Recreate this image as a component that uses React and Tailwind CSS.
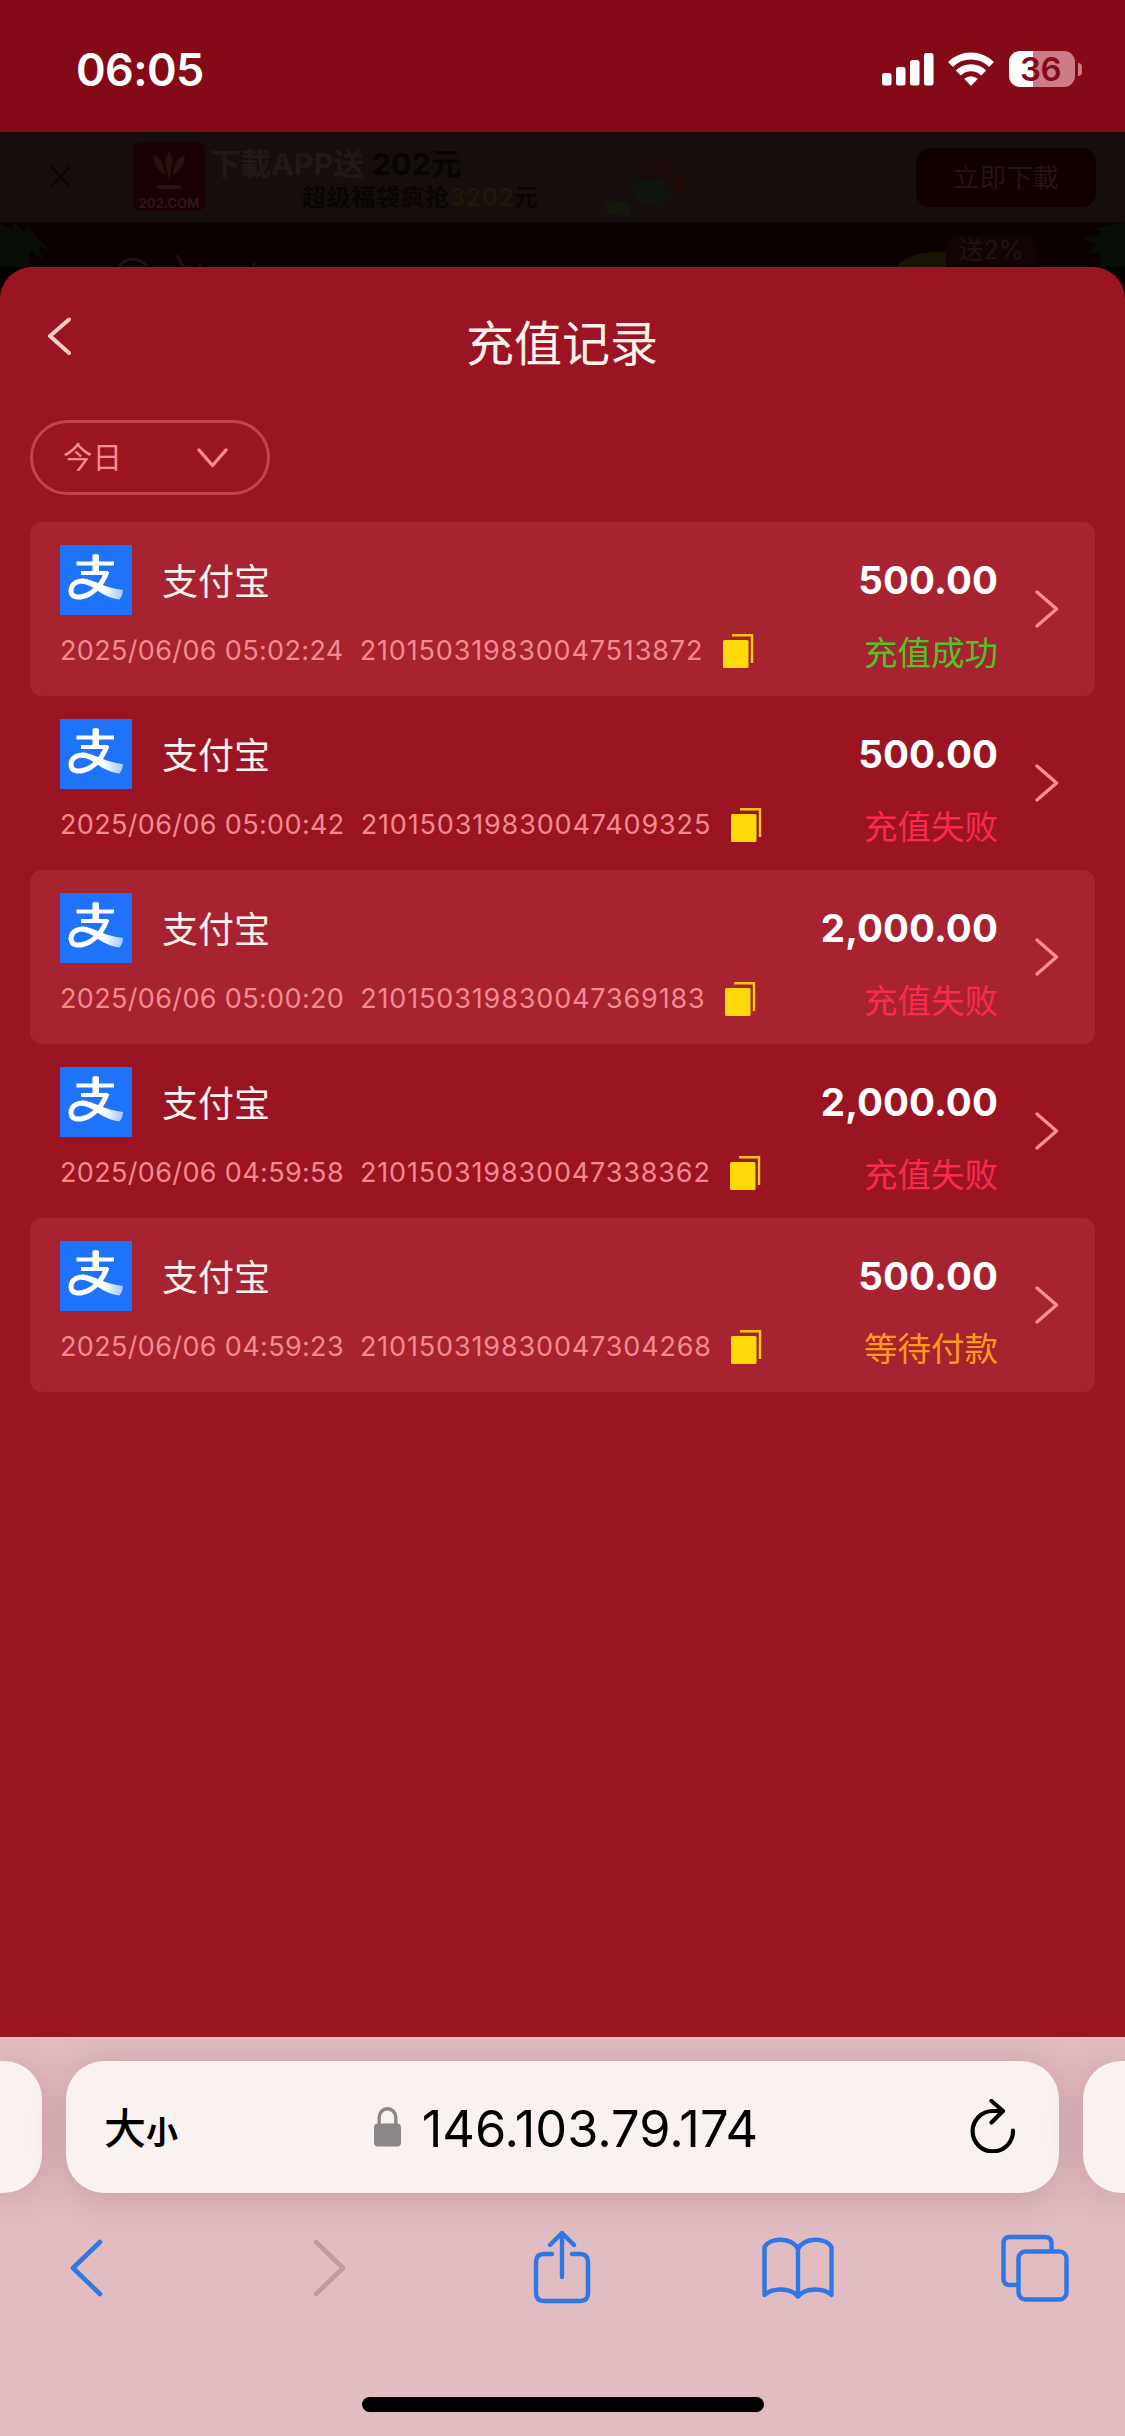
import React from "react";

const records = [
  { time: "2025/06/06 05:02:24", id: "210150319830047513872", amount: "500.00", status: "success" },
  { time: "2025/06/06 05:00:42", id: "210150319830047409325", amount: "500.00", status: "failed" },
  { time: "2025/06/06 05:00:20", id: "210150319830047369183", amount: "2,000.00", status: "failed" },
  { time: "2025/06/06 04:59:58", id: "210150319830047338362", amount: "2,000.00", status: "failed" },
  { time: "2025/06/06 04:59:23", id: "210150319830047304268", amount: "500.00", status: "pending" },
];

const statusMap = {
  success: { label: "充值成功", color: "text-[#4fc32b]" },
  failed: { label: "充值失败", color: "text-[#fb2a50]" },
  pending: { label: "等待付款", color: "text-[#fd9a1c]" },
};

const StatusBar = () => (
  <header className="h-[132px] shrink-0 flex items-start justify-between bg-[#850a18] pl-[76px] pr-[43px] text-white">
    <span className="mt-[42px] text-[45px] leading-[56px] tracking-[-0.6px] font-semibold">06:05</span>
    <div className="mt-[51px] flex items-start">
      <svg className="mt-[2px]" width="52" height="33" viewBox="0 0 52 33" fill="currentColor">
        <rect x="0" y="20" width="9.5" height="12.5" rx="2.5" />
        <rect x="14" y="14" width="9.5" height="18.5" rx="2.5" />
        <rect x="28" y="7" width="9.5" height="25.5" rx="2.5" />
        <rect x="42" y="0" width="9.5" height="32.5" rx="2.5" />
      </svg>
      <svg className="ml-[14px] mt-px" width="46" height="34" viewBox="0 0 46 34" fill="none" stroke="currentColor" strokeWidth="7">
        <path d="M2.5 12.5a29 29 0 0 1 41 0" />
        <path d="M10.3 21a18 18 0 0 1 25.4 0" />
        <path d="M23 34l-6.8-7.2q6.8-5 13.6 0z" fill="currentColor" stroke="none" />
      </svg>
      <div className="ml-[15px] flex items-center">
        <div className="w-[66px] h-[36px] rounded-[11px] bg-[linear-gradient(90deg,#fff_24px,#cd7b86_24px)] flex items-center justify-center">
          <span className="text-[33px] leading-none font-semibold text-[#850a18] tracking-[-0.5px] mr-[3px]">36</span>
        </div>
        <div className="ml-[3px] w-[4px] h-[13px] rounded-r-full bg-[#cd7b86]" />
      </div>
    </div>
  </header>
);

/* Page behind the sheet, darkened by the overlay */
const DimmedPage = () => (
  <div className="h-[135px] shrink-0 bg-[#0b0101]">
    <div className="h-[90px] bg-[#150e0d] flex items-start">
      <svg className="ml-[49px] mt-[31px]" width="23" height="27" viewBox="0 0 26 28" stroke="#090505" strokeWidth="2.5">
        <path d="M2 2l22 24M24 2L2 26" />
      </svg>
      <div className="ml-[61px] mt-[10px] w-[72px] h-[69px] rounded-lg bg-[#1a0103] flex flex-col items-center justify-end">
        <svg width="40" height="48" viewBox="0 0 40 44" fill="#241310">
          <path d="M20 2l4 8-4 22-4-22zM4 6q10 2 12 20Q5 20 4 6zM36 6q-10 2-12 20Q35 20 36 6zM8 36h24v4H8z" />
        </svg>
        <span className="text-[13px] leading-[16px] font-bold text-[#2a1917]">202.COM</span>
      </div>
      <div className="ml-[5px] mt-[14px] w-[330px] flex flex-col">
        <span className="text-[30.5px] leading-[36px] font-bold text-[#211918] whitespace-nowrap">
          下載APP送<span className="ml-2 text-[#090404]">202元</span>
        </span>
        <span className="ml-[92px] text-[24px] leading-[32px] tracking-[0.6px] font-bold text-[#0a0504] whitespace-nowrap">
          超级福袋疯抢<span className="text-[#24150a]">3202</span>元
        </span>
      </div>
      <svg className="ml-[50px] mt-[8px]" width="150" height="80" viewBox="0 0 150 80">
        <path d="M52 22l24-8 12 18-16 14-20-8z" fill="#1a0b0a" />
        <path d="M82 36h14v18H84z" fill="#1e0808" />
        <path d="M42 44l30-6 6 24-30 4z" fill="#10140e" />
        <path d="M12 60l26 2 4 14-24-2z" fill="#14170b" />
      </svg>
      <div className="ml-[176px] mt-[16px] w-[180px] h-[59px] rounded-[14px] bg-[#100002] flex items-center justify-center text-[26.5px] text-[#241414]">
        立即下載
      </div>
    </div>
    <div className="h-[45px] flex items-start justify-between">
      <div className="flex items-start">
        <svg width="60" height="45" viewBox="0 0 60 45" fill="#090d08">
          <path d="M0 2l12 6 2-8 10 10 4-8 8 12 14 14-12-4 6 16-14-12-2 18H0z" />
        </svg>
        <svg className="ml-[56px] mt-[33px]" width="150" height="12" viewBox="0 0 150 12" fill="none" stroke="#1d1111" strokeWidth="3">
          <path d="M2 12Q16-4 32 12M61 0l6 12M84 12v-4M138 12v-4" />
        </svg>
      </div>
      <div className="flex items-start">
        <svg className="mt-[28px]" width="50" height="17" viewBox="0 0 50 17" fill="#171402">
          <path d="M0 17Q14 0 50 2v15z" />
        </svg>
        <div className="mt-[13px] w-[90px] h-[32px] rounded-t-xl bg-[#120405] flex items-center justify-center text-[25px] text-[#241211]">送2%</div>
        <svg className="ml-[39px]" width="50" height="45" viewBox="0 0 50 45" fill="#090d08">
          <path d="M50 0L34 4 20 6l8 6-22 4 16 6-12 10 16-2-2 15h28z" />
        </svg>
      </div>
    </div>
  </div>
);

const AlipayLogo = () => (
  <svg width="72" height="70" viewBox="0 0 72 70" fill="none">
    <defs>
      <linearGradient id="tail" x1="44" y1="46" x2="64" y2="50" gradientUnits="userSpaceOnUse">
        <stop stopColor="#fff" />
        <stop offset="1" stopColor="#9cc4ff" />
      </linearGradient>
    </defs>
    <rect width="72" height="70" fill="#1f72fa" />
    <path d="M16.5 18.5H54M21 28h27" stroke="#fff" strokeWidth="4" />
    <path d="M32.5 10q3-2 6.500 0V28h-6.500z" fill="#fff" />
    <path d="M47 26.500Q42 41 31 48C20 54.500 11 53 11 45.500 11 38 19 34.500 27 36.500" stroke="#fff" strokeWidth="5" />
    <path d="M22 33.500Q30 34 38 38 50 43.500 63 45q0 5-3.500 9.500Q48 53 38 46 29 39 21 38.500z" fill="url(#tail)" />
  </svg>
);

const CopyIcon = () => (
  <svg className="ml-[19.5px]" width="32" height="34" viewBox="0 0 32 34">
    <rect x="0" y="6" width="25.500" height="28" rx="1.500" fill="#fdd90a" />
    <path d="M9 1.200h20V29" fill="none" stroke="#fdca1c" strokeWidth="2.400" />
  </svg>
);

const RecordRow = ({ record, striped }) => {
  const status = statusMap[record.status];
  return (
    <li className={`h-[174px] pl-[30px] pr-[36px] flex rounded-xl ${striped ? "bg-[#a7232f]" : ""}`}>
      <div className="flex-1 pt-[23px]">
        <div className="flex items-center h-[70px]">
          <AlipayLogo />
          <span className="ml-[30px] mt-[3px] text-[36px] leading-[44px] text-[#fff1ee]">支付宝</span>
        </div>
        <div className="mt-[19px] flex items-center h-[34px] text-[27px] leading-[34px] text-[#f38a92] whitespace-nowrap">
          <span className="tracking-[0.35px]">{record.time}</span>
          <span className="ml-[16px] tracking-[0.85px]">{record.id}</span>
          <CopyIcon />
        </div>
      </div>
      <div className="flex flex-col items-end">
        <span className="mt-[34px] text-[38.5px] leading-[48px] tracking-[0.1px] font-bold text-white">{record.amount}</span>
        <span className={`mt-[26px] text-[33.5px] leading-[46px] ${status.color}`}>{status.label}</span>
      </div>
      <svg className="ml-[37px] mt-[68px]" width="24" height="38" viewBox="0 0 24 38" fill="none" stroke="#fa8f98" strokeWidth="3.400" strokeLinecap="round" strokeLinejoin="round">
        <path d="M2 2l19.500 17L2 36" />
      </svg>
    </li>
  );
};

const RechargeSheet = () => (
  <main className="h-[1770px] shrink-0 bg-[#040201]">
    <div className="h-full rounded-t-[32px] bg-[#9a1521] px-[30px]">
      <div className="h-[153px] flex">
        <svg className="ml-[17px] mt-[50px]" width="25" height="38" viewBox="0 0 25 38" fill="none" stroke="#ffcccc" strokeWidth="4" strokeLinecap="round" strokeLinejoin="round">
          <path d="M22 2.500L3 19l19 17" />
        </svg>
        <h1 className="flex-1 mr-[43px] mt-[42px] text-center text-[48px] leading-[70px] text-[#fff1ee]">充值记录</h1>
      </div>
      <button className="w-[240px] h-[75px] rounded-full border-[3px] border-[#c54350] pl-[30px] pr-[39px] flex items-center justify-between text-[29.5px] text-[#f98b90]">
        今日
        <svg width="31" height="20" viewBox="0 0 31 20" fill="none" stroke="#f98b90" strokeWidth="3.400" strokeLinecap="round" strokeLinejoin="round">
          <path d="M2 2l13.500 15.500L29 2" />
        </svg>
      </button>
      <ul className="mt-[27px]">
        {records.map((record, i) => (
          <RecordRow key={record.id} record={record} striped={i % 2 === 0} />
        ))}
      </ul>
    </div>
  </main>
);

const BrowserBar = () => (
  <footer className="h-[399px] shrink-0 bg-[#e1bcc1] pt-[24px] overflow-hidden flex flex-col items-center">
    <div className="h-[132px] w-full flex gap-[24px] justify-center">
      <div className="w-[42px] shrink-0 rounded-r-[38px] bg-[#faf1f1] shadow-[0_4px_36px_rgba(110,40,60,0.22)]" />
      <div className="w-[993px] shrink-0 rounded-[38px] bg-[#faf1f1] shadow-[0_4px_36px_rgba(110,40,60,0.22)] flex items-center pl-[38px] pr-[43px] text-black">
        <div className="w-[120px] mt-[4px] flex items-baseline">
          <span className="text-[42px] leading-none font-medium">大</span>
          <span className="text-[32px] leading-none font-bold">小</span>
        </div>
        <div className="flex-1 flex items-center justify-center">
          <svg width="27" height="40" viewBox="0 0 27 40">
            <path d="M5.200 19v-8.500a8.300 8.800 0 0 1 16.600 0V19" fill="none" stroke="#8b8687" strokeWidth="3.400" />
            <rect x="0" y="16.500" width="27" height="23" rx="4" fill="#8b8687" />
          </svg>
          <span className="ml-[21px] mt-[3px] text-[50.5px] leading-[62px]">146.103.79.174</span>
        </div>
        <svg className="ml-[62px] mb-[2px]" width="46" height="54" viewBox="0 0 46 54" fill="none" stroke="currentColor" strokeWidth="4.200" strokeLinecap="round" strokeLinejoin="round">
          <path d="M43 31.500A20.200 20.200 0 1 1 23 12h9" />
          <path d="M21.500 2L33 12 21.500 23.500" />
        </svg>
      </div>
      <div className="w-[42px] shrink-0 rounded-l-[38px] bg-[#faf1f1] shadow-[0_4px_36px_rgba(110,40,60,0.22)]" />
    </div>
    <nav className="mt-[35px] w-full h-[80px] pl-[69px] flex items-center text-[#2f76e6]">
      <svg width="34" height="58" viewBox="0 0 34 58" fill="none" stroke="currentColor" strokeWidth="4.600" strokeLinecap="round" strokeLinejoin="round">
        <path d="M31 3L4 29l27 26" />
      </svg>
      <svg className="ml-[210px] text-[#bc9ca2]" width="34" height="58" viewBox="0 0 34 58" fill="none" stroke="currentColor" strokeWidth="4.600" strokeLinecap="round" strokeLinejoin="round">
        <path d="M3 3l27 26L3 55" />
      </svg>
      <svg className="ml-[186px] mb-[3px]" width="58" height="74" viewBox="0 0 58 74" fill="none" stroke="currentColor" strokeWidth="4.400" strokeLinecap="round" strokeLinejoin="round">
        <path d="M19 24H11q-8 0-8 8v31q0 8 8 8h36q8 0 8-8V32q0-8-8-8h-8" />
        <path d="M29 47V3M17 15L29 3l12 12" />
      </svg>
      <svg className="ml-[171px]" width="72" height="62" viewBox="0 0 72 62" fill="none" stroke="currentColor" strokeWidth="4.400" strokeLinecap="round" strokeLinejoin="round">
        <path d="M36 12C30 0 8 0 2.500 10v48C10 51 28 50 36 59.500 44 50 62 51 69.500 58V10C64 0 42 0 36 12z" />
        <path d="M36 12v47" />
      </svg>
      <svg className="ml-[167px]" width="68" height="68" viewBox="0 0 68 68" fill="none" stroke="currentColor" strokeWidth="4.400">
        <path d="M17 51H9q-6.500 0-6.500-6.500v-35Q2.500 3 9 3h35q6.500 0 6.500 6.500V17" />
        <rect x="17.500" y="17.500" width="48" height="48" rx="7" />
      </svg>
    </nav>
    <div className="mt-[89px] w-[402px] h-[15px] rounded-full bg-black" />
  </footer>
);

const App = () => (
  <div className="w-[1125px] h-[2436px] flex flex-col overflow-hidden font-['Inter','Noto_Sans_CJK_SC',sans-serif]">
    <StatusBar />
    <DimmedPage />
    <RechargeSheet />
    <BrowserBar />
  </div>
);

export default App;
